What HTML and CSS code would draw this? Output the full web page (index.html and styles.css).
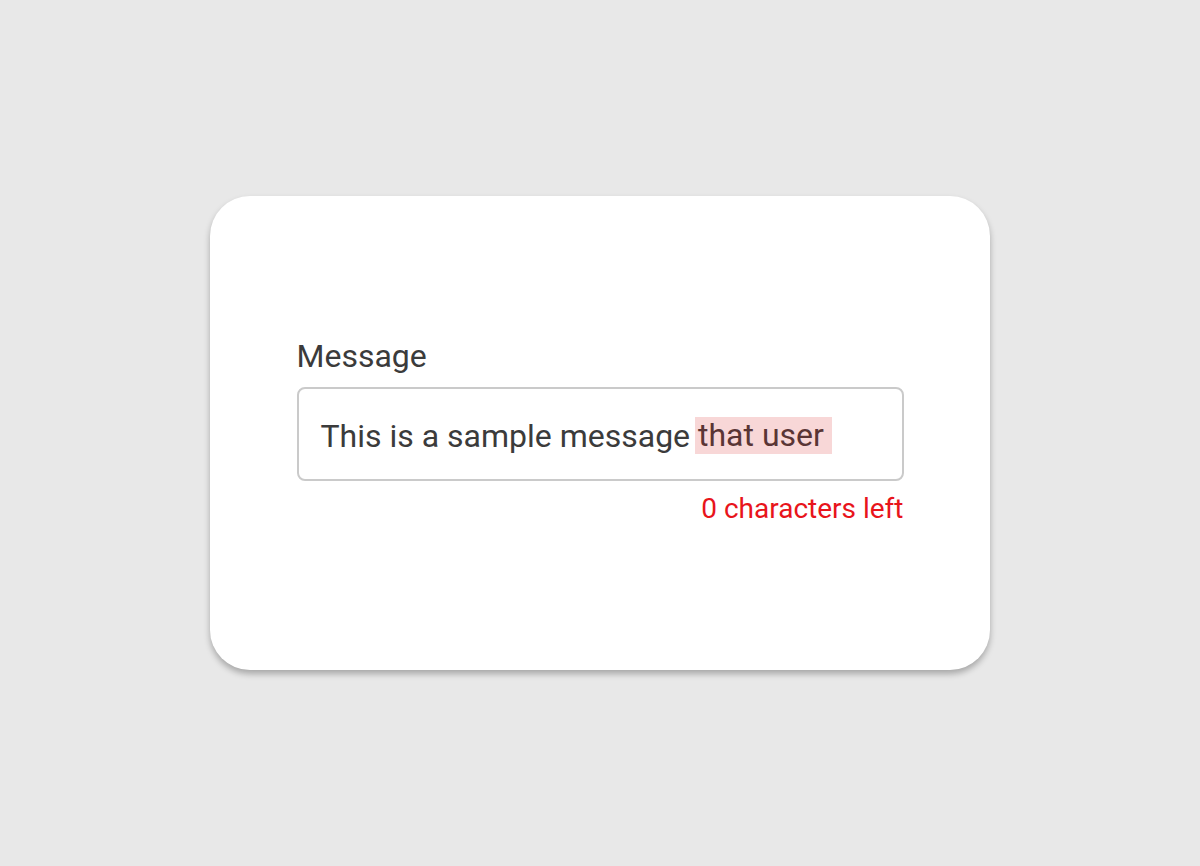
FILE: index.html
```html
<!DOCTYPE html>
<html lang="en">
<head>
<meta charset="utf-8">
<title>Message</title>
<link rel="stylesheet" href="styles.css">
</head>
<body>
<main class="stage">
  <section class="card">
    <div class="field">
      <label class="label">Message</label>
      <div class="input">This is a sample message <span class="over">that user </span></div>
      <div class="counter">0 characters left</div>
    </div>
  </section>
</main>
</body>
</html>
```
FILE: styles.css
```css
html, body {
  margin: 0;
  padding: 0;
}
body {
  background: #e8e8e8;
  font-family: Roboto, "Liberation Sans", sans-serif;
}
.stage {
  height: 866px;
  display: flex;
  align-items: center;
  justify-content: center;
}
.card {
  width: 780px;
  height: 474px;
  background: #fff;
  border-radius: 40px;
  box-shadow: 0 4px 6px rgba(0, 0, 0, 0.28);
  display: flex;
  align-items: center;
  justify-content: center;
}
.field {
  width: 607px;
  display: flex;
  flex-direction: column;
}
.label {
  font-size: 32px;
  color: #3b3b3b;
  line-height: 30px;
  margin-bottom: 16px;
}
.input {
  box-sizing: border-box;
  height: 94px;
  border: 2px solid #cacaca;
  border-radius: 8px;
  padding: 3px 22px 0;
  display: flex;
  align-items: center;
  font-size: 32px;
  color: #3b3b3b;
  white-space: pre;
}
.over {
  background: #f8d7d7;
  color: #5a3535;
  line-height: 37px;
  margin-left: -3px;
  padding-left: 3px;
}
.counter {
  align-self: flex-end;
  font-size: 28px;
  color: #e8141b;
  line-height: 32px;
  margin-top: 12px;
}
```
